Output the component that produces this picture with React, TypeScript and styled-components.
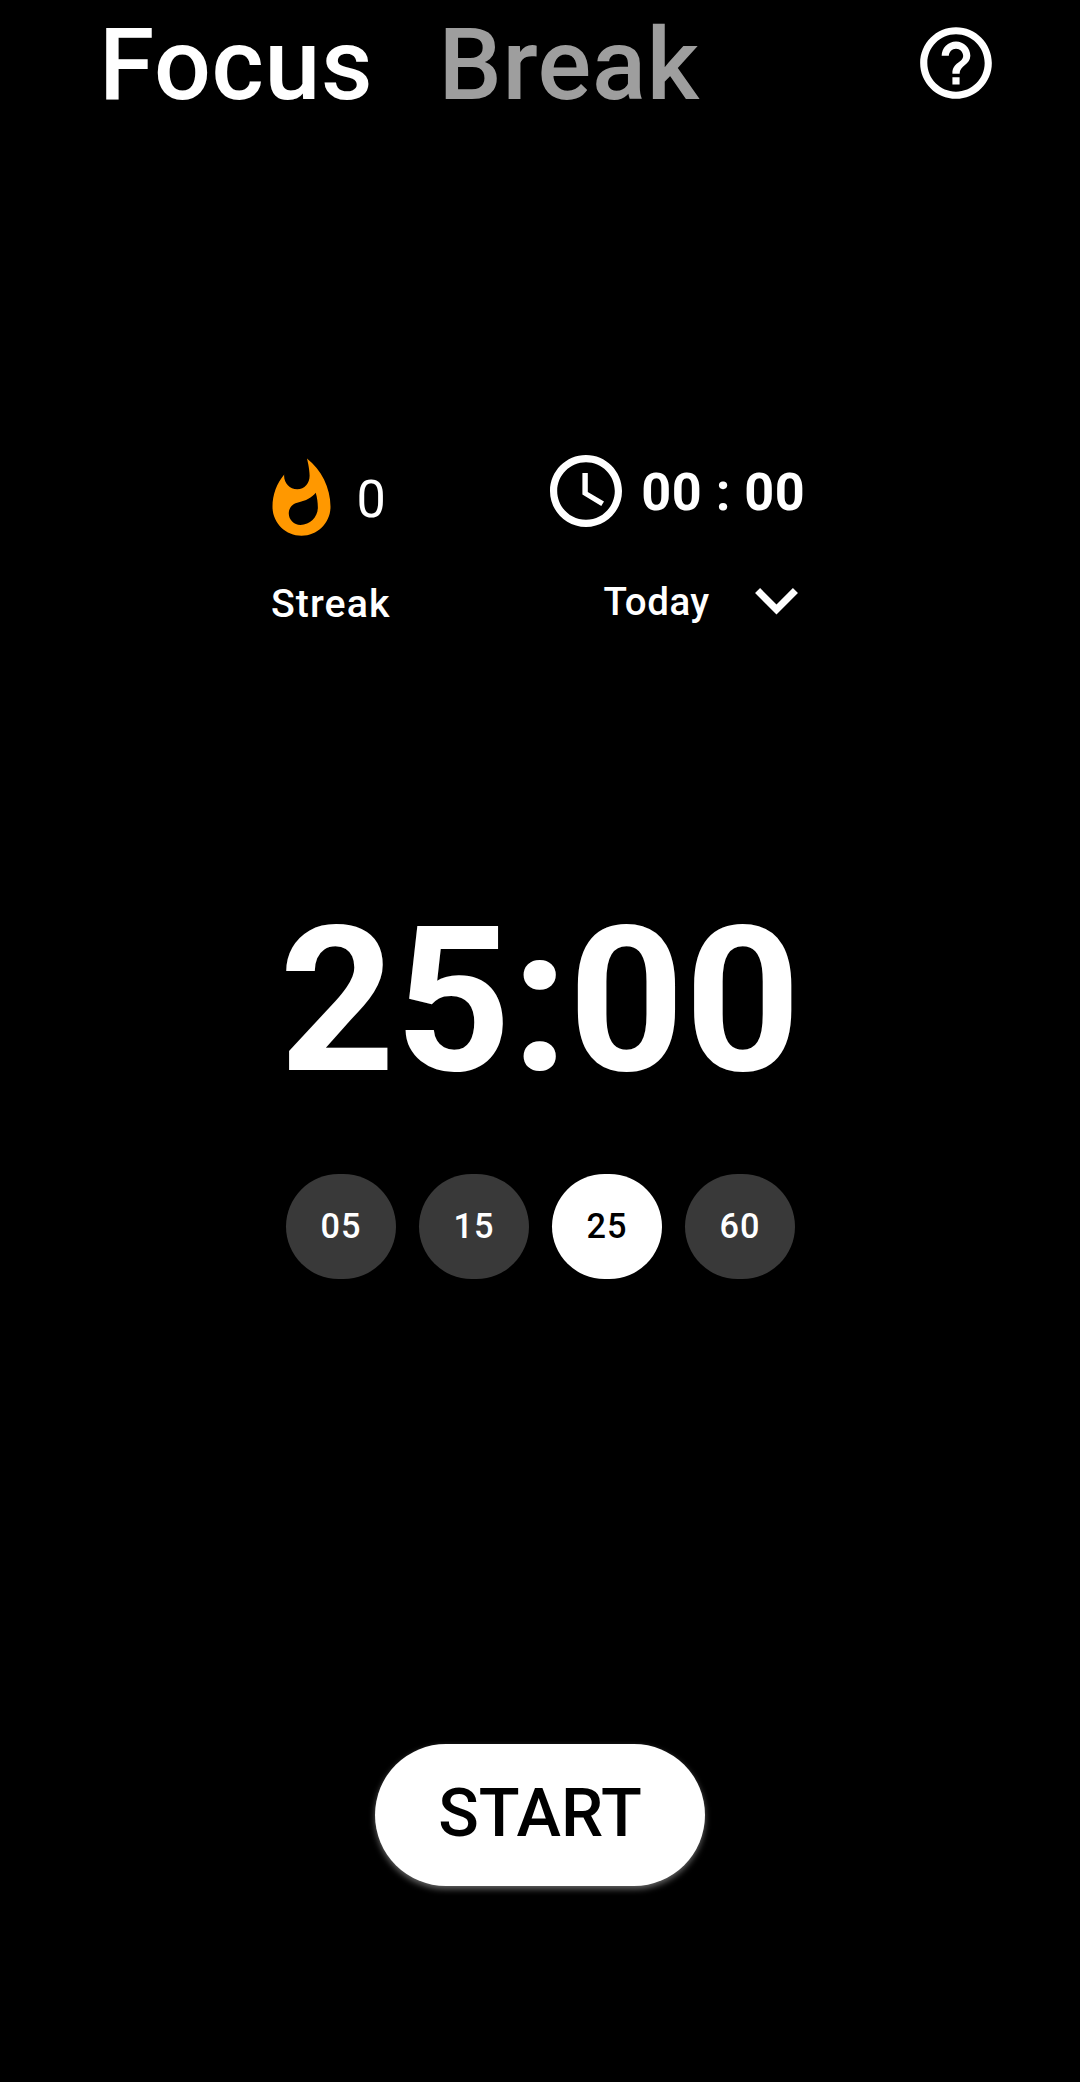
import React from "react";
import styled, { createGlobalStyle } from "styled-components";

const Global = createGlobalStyle`
  body { margin: 0; background: #000; }
  * { box-sizing: border-box; }
  button { border: 0; padding: 0; margin: 0; background: none; font-family: inherit; color: inherit; }
  svg { display: block; flex: none; }
`;
const Screen = styled.main`
  width: 1080px; height: 2082px; background: #000; color: #fff; overflow: hidden;
  font-family: Roboto, sans-serif; display: flex; flex-direction: column;
`;
const Header = styled.header`
  height: 130px; display: flex; align-items: flex-start; padding: 6px 81px 0 99px;
`;
const Tab = styled.button<{ $active?: boolean }>`
  font-size: 100.3px; line-height: 117px; font-weight: 500; text-align: left; letter-spacing: 0.7px;
  color: ${(p) => (p.$active ? "#fff" : "#9e9e9e")};
  margin-right: 65px; white-space: nowrap;
`;
const Help = styled.button`
  margin: 14px 0 0 auto; display: flex; width: 86px; height: 86px;
`;
const Stats = styled.section`
  height: 520px; padding: 314px 0 0 258px; display: flex;
`;
const Stat = styled.div<{ $w: number }>`
  width: ${(p) => p.$w}px; display: flex; flex-direction: column;
`;
const Row = styled.div<{ $h: number; $left?: number }>`
  flex: none; height: ${(p) => p.$h}px; display: flex; align-items: center; padding-left: ${(p) => p.$left || 0}px;
`;
const Value = styled.span<{ $weight: number; $ls?: number; $ml: number; $top: number }>`
  font-weight: ${(p) => p.$weight}; font-size: 52.2px; letter-spacing: ${(p) => p.$ls || 0}px;
  margin-left: ${(p) => p.$ml}px; white-space: nowrap; line-height: 60px; padding-top: ${(p) => p.$top}px;
`;
const Label = styled.span<{ $size: number; $ls: number }>`
  font-size: ${(p) => p.$size}px; font-weight: 500; letter-spacing: ${(p) => p.$ls}px; line-height: 46px;
`;
const Chevron = styled.svg`
  width: 43px; height: 26.5px; margin-left: 45px;
`;
const Timer = styled.div`
  margin-top: 230.5px; height: 240px; line-height: 240px; font-size: 202px; font-weight: 700; text-align: center;
  letter-spacing: 0.2px;
`;
const Presets = styled.div`
  margin-top: 53.5px; display: flex; justify-content: center; gap: 23px;
`;
const Preset = styled.button<{ $active?: boolean }>`
  width: 110px; height: 105px; border-radius: 53px; padding: 0 0 2px 1px;
  font-size: 34.3px; font-weight: 500; letter-spacing: 0.9px;
  background: ${(p) => (p.$active ? "#fff" : "#393939")}; color: ${(p) => (p.$active ? "#000" : "#fff")};
`;
const Start = styled.button`
  align-self: center; margin-top: 464.5px; width: 330px; height: 142.5px; border-radius: 71px; padding-bottom: 3px;
  background: #fff; color: #000; font-size: 67px; font-weight: 500;
  box-shadow: 0 3px 6px rgba(255, 255, 255, 0.4);
`;

export default function App() {
  return (
    <Screen>
      <Global />
      <Header>
        <Tab $active>Focus</Tab>
        <Tab>Break</Tab>
        <Help aria-label="Help">
          <svg width="86" height="86" viewBox="0 0 24 24" fill="#fff"><path d="M11 18h2v-2h-2v2zm1-16C6.48 2 2 6.48 2 12s4.48 10 10 10 10-4.48 10-10S17.52 2 12 2zm0 18c-4.41 0-8-3.59-8-8s3.59-8 8-8 8 3.59 8 8-3.59 8-8 8zm0-14c-2.21 0-4 1.79-4 4h2c0-1.1.9-2 2-2s2 .9 2 2c0 2-3 1.75-3 5h2c0-2.25 3-2.5 3-5 0-2.21-1.79-4-4-4z" /></svg>
        </Help>
      </Header>
      <Stats>
        <Stat $w={292}>
          <Row $h={111}>
            <svg width="87" height="87" viewBox="0 0 24 24" fill="#ff9800"><path d="M13.5.67s.74 2.65.74 4.8c0 2.06-1.35 3.73-3.41 3.73-2.07 0-3.63-1.67-3.63-3.73l.03-.36C5.21 7.51 4 10.62 4 14c0 4.42 3.58 8 8 8s8-3.58 8-8C20 8.61 17.41 3.8 13.5.67zM11.71 19c-1.78 0-3.22-1.4-3.22-3.14 0-1.62 1.05-2.76 2.81-3.12 1.77-.36 3.6-1.21 4.62-2.58.39 1.29.59 2.65.59 4.04 0 2.65-2.15 4.8-4.8 4.8z" /></svg>
            <Value $weight={400} $ml={11.5} $top={0}>0</Value>
          </Row>
          <Row $h={98} $left={13}><Label $size={39.3} $ls={1.05}>Streak</Label></Row>
        </Stat>
        <Stat $w={280}>
          <Row $h={93.5}>
            <svg width="72" height="72" viewBox="2 2 20 20" fill="#fff"><path d="M11.99 2C6.47 2 2 6.48 2 12s4.47 10 9.99 10C17.52 22 22 17.52 22 12S17.52 2 11.99 2zM12 20c-4.42 0-8-3.58-8-8s3.58-8 8-8 8 3.58 8 8-3.58 8-8 8zm.5-13H11v6l5.25 3.15.75-1.23-4.5-2.67z" /></svg>
            <Value $weight={700} $ls={0.5} $ml={19.3} $top={4}>00 : 00</Value>
          </Row>
          <Row $h={128} $left={53.5}><Label $size={38.5} $ls={0.5}>Today</Label>
            <Chevron viewBox="6 8.59 12 7.41" fill="#fff"><path d="M7.41 8.59L12 13.17l4.59-4.58L18 10l-6 6-6-6 1.41-1.41z" /></Chevron>
          </Row>
        </Stat>
      </Stats>
      <Timer>25:00</Timer>
      <Presets><Preset>05</Preset><Preset>15</Preset><Preset $active>25</Preset><Preset>60</Preset></Presets>
      <Start>START</Start>
    </Screen>
  );
}
